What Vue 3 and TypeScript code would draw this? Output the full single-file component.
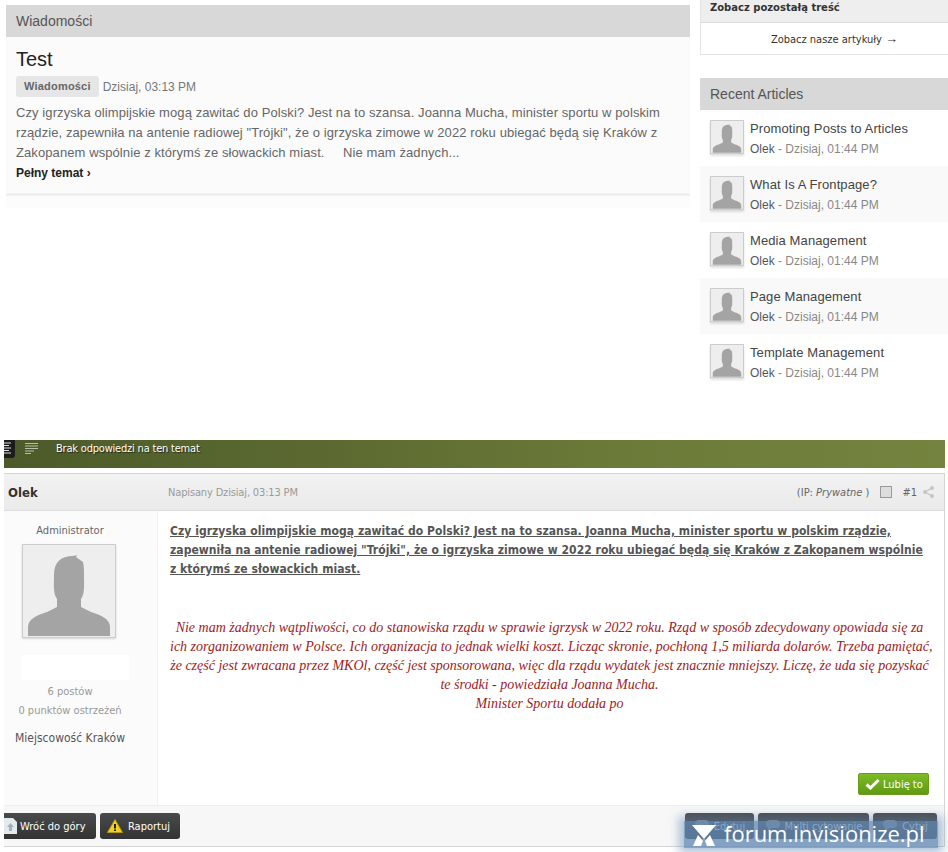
<template>
  <div class="page">
    <div class="top">
      <main class="news">
        <h2 class="block-head">Wiadomości</h2>
        <article class="story">
          <h1 class="story-title">Test</h1>
          <div class="story-meta">
            <span class="chip">Wiadomości</span>
            <span>Dzisiaj, 03:13 PM</span>
          </div>
          <p class="story-text">
            Czy igrzyska olimpijskie mogą zawitać do Polski? Jest na to szansa. Joanna Mucha, minister sportu w polskim<br />
            rządzie, zapewniła na antenie radiowej "Trójki", że o igrzyska zimowe w 2022 roku ubiegać będą się Kraków z<br />
            Zakopanem wspólnie z którymś ze słowackich miast. &nbsp;&nbsp;&nbsp; Nie mam żadnych...
          </p>
          <a class="story-more">Pełny temat ›</a>
        </article>
        <div class="news-tail"></div>
      </main>

      <aside class="side">
        <div class="see-more">
          <div class="see-more-head">Zobacz pozostałą treść</div>
          <div class="see-more-body">Zobacz nasze artykuły <span class="arrow">→</span></div>
        </div>
        <h2 class="block-head recent-head">Recent Articles</h2>
        <ul class="recent">
          <li v-for="(title, i) in articles" :key="title" class="recent-row" :class="{ odd: i % 2 === 1 }">
            <span class="thumb">
              <svg viewBox="0 0 92 92"><path :d="silhouette" /></svg>
            </span>
            <div>
              <div class="recent-title">{{ title }}</div>
              <div class="recent-meta"><b>Olek</b> - Dzisiaj, 01:44 PM</div>
            </div>
          </li>
        </ul>
      </aside>
    </div>

    <div class="topic-bar">
      <span class="bar-tab">
        <svg width="8" height="12" viewBox="0 0 8 12"><path d="M0 1h7M0 3.5h5M0 6h7M0 8.500h5M0 11h7" stroke="#ddd" /></svg>
      </span>
      <svg class="bar-icon" width="13" height="12" viewBox="0 0 13 12"><path d="M0 .5h13M0 3h13M0 5.500h13M0 8h9M0 10.500h6" stroke="#b9bfa5" /></svg>
      <span class="bar-text">Brak odpowiedzi na ten temat</span>
    </div>

    <section class="post">
      <header class="post-head">
        <strong class="author">Olek</strong>
        <span class="post-date">Napisany Dzisiaj, 03:13 PM</span>
        <span class="post-tools">
          <span class="ip">(IP: <i>Prywatne</i> )</span>
          <span class="check"></span>
          <span class="post-no">#1</span>
          <svg width="11" height="12" viewBox="0 0 11 12">
            <path d="M9 2 2 6l7 4" fill="none" stroke="#c4c4c4" stroke-width="1.2" />
            <circle cx="9" cy="2" r="1.900" fill="#c4c4c4" />
            <circle cx="2" cy="6" r="1.900" fill="#c4c4c4" />
            <circle cx="9" cy="10" r="1.900" fill="#c4c4c4" />
          </svg>
        </span>
      </header>

      <div class="post-main">
        <div class="author-col">
          <div class="rank">Administrator</div>
          <div class="avatar">
            <svg viewBox="0 0 92 92"><path :d="silhouette" /></svg>
          </div>
          <div class="rank-img"></div>
          <div class="stat">6 postów</div>
          <div class="stat">0 punktów ostrzeżeń</div>
          <div class="place">Miejscowość Kraków</div>
        </div>

        <div class="post-body">
          <p class="lead">
            <span v-for="line in leadLines" :key="line" class="lead-line"><u>{{ line }}</u></span>
          </p>
          <p class="quote">
            <span v-for="line in quoteLines" :key="line" class="quote-line">{{ line }}</span>
          </p>
          <div class="like-row">
            <span class="like">
              <svg width="15" height="12" viewBox="0 0 15 12"><path d="M1.500 6.500 5.500 10 13.500 2" fill="none" stroke="#fff" stroke-width="3" /></svg>
              Lubię to
            </span>
          </div>
        </div>
      </div>

      <footer class="post-foot">
        <div class="foot-group">
          <span class="btn btn-top">
            <svg width="13" height="16" viewBox="0 0 13 16"><path d="M0 0h9l4 4v12H0z" fill="#e4e9ee" /><path d="M6.500 5 3 9h2v4h3V9h2z" fill="#9fb2bf" /></svg>
            Wróć do góry
          </span>
          <span class="btn btn-report">
            <svg width="16" height="14" viewBox="0 0 16 14"><path d="M8 .5 15.500 13.500H.5z" fill="#f2d21e" stroke="#b99a10" /><path d="M7 5h2v4.500H7zM7 10.500h2V12H7z" fill="#222" /></svg>
            Raportuj
          </span>
        </div>
        <div class="foot-group">
          <span v-for="b in rightButtons" :key="b.label" class="btn btn-right" :style="{ width: `${b.width}px` }">
            <svg width="15" height="12" viewBox="0 0 15 12"><path d="M4 0h7a4 4 0 0 1 0 8H7l-4 4V7.500A4 4 0 0 1 4 0z" fill="#8a8a8a" /></svg>
            {{ b.label }}
          </span>
        </div>
      </footer>
    </section>

    <div class="watermark">
      <svg width="24" height="24" viewBox="0 0 24 24"><path d="M0 2h24L12 16z M1 23l5-11 5 6-2 5z M23 23l-5-11-5 6 2 5z" fill="#fff" /></svg>
      <span class="watermark-text">forum.invisionize.pl</span>
    </div>
  </div>
</template>

<script setup lang="ts">
const silhouette =
  'M5 91V82C5 74 14 70 24 67L34 62V54C30 48 31 40 31 30C31 17 38 11 50 11L54 10L53 12L60 17C61 22 61 26 61 30C61 40 62 48 58 54V62L68 67C78 70 87 74 87 82V91Z'

const articles: string[] = [
  'Promoting Posts to Articles',
  'What Is A Frontpage?',
  'Media Management',
  'Page Management',
  'Template Management',
]

const leadLines: string[] = [
  'Czy igrzyska olimpijskie mogą zawitać do Polski? Jest na to szansa. Joanna Mucha, minister sportu w polskim rządzie,',
  'zapewniła na antenie radiowej "Trójki", że o igrzyska zimowe w 2022 roku ubiegać będą się Kraków z Zakopanem wspólnie',
  'z którymś ze słowackich miast.',
]

const quoteLines: string[] = [
  'Nie mam żadnych wątpliwości, co do stanowiska rządu w sprawie igrzysk w 2022 roku. Rząd w sposób zdecydowany opowiada się za',
  'ich zorganizowaniem w Polsce. Ich organizacja to jednak wielki koszt. Licząc skronie, pochłoną 1,5 miliarda dolarów. Trzeba pamiętać,',
  'że część jest zwracana przez MKOl, część jest sponsorowana, więc dla rządu wydatek jest znacznie mniejszy. Liczę, że uda się pozyskać',
  'te środki - powiedziała Joanna Mucha.',
  'Minister Sportu dodała po',
]

const rightButtons = [
  { label: 'Edytuj', width: 69 },
  { label: 'Multi cytowanie', width: 111 },
  { label: 'Cytuj', width: 64 },
]
</script>

<style>
html,
body {
  background: #fff;
}
</style>

<style scoped>
.page {
  position: relative;
  width: 948px;
  height: 852px;
  overflow: hidden;
  background: #fff;
  font-family: "Liberation Sans", Arial, sans-serif;
  font-size: 12px;
  color: #666;
}

.top {
  display: flex;
  height: 440px;
}

.news {
  width: 684px;
  margin: 5px 0 0 6px;
}

.block-head {
  margin: 0;
  height: 32px;
  padding-left: 10px;
  background: #d8d8d8;
  color: #555;
  font-size: 14px;
  font-weight: 400;
  line-height: 32px;
}

.story {
  height: 159px;
  padding: 10px 10px 0;
  box-sizing: border-box;
  background: #fbfbfb;
  border-bottom: 3px solid #f0f0f0;
}

.story-title {
  margin: 0;
  color: #222;
  font-size: 20px;
  font-weight: 400;
  line-height: 25px;
}

.story-meta {
  display: flex;
  align-items: center;
  gap: 4px;
  margin-top: 4px;
  color: #777;
}

.chip {
  padding: 0 8px;
  background: #e6e6e6;
  border-radius: 3px;
  color: #666;
  font-size: 11px;
  font-weight: 700;
  letter-spacing: 0.2px;
  line-height: 21px;
}

.story-text {
  margin: 6px 0 0;
  font-size: 13px;
  letter-spacing: 0.09px;
  line-height: 20px;
}

.story-more {
  display: block;
  color: #222;
  font-weight: 700;
  line-height: 20px;
}

.news-tail {
  height: 12px;
  background: #fcfcfc;
}

.side {
  width: 248px;
  margin-left: 10px;
}

.see-more {
  border-left: 1px solid #e4e4e4;
  border-bottom: 1px solid #e4e4e4;
}

.see-more-head {
  height: 22px;
  padding-left: 9px;
  background: #eee;
  border-bottom: 1px solid #ddd;
  color: #333;
  font-family: "DejaVu Sans", Verdana, sans-serif;
  font-size: 10px;
  font-weight: 700;
  line-height: 16px;
}

.see-more-body {
  height: 31px;
  padding-left: 20px;
  text-align: center;
  color: #333;
  font-family: "DejaVu Sans Condensed", "DejaVu Sans", sans-serif;
  font-size: 11px;
  line-height: 31px;
}

.arrow {
  font-family: "Liberation Sans", sans-serif;
  font-size: 13px;
}

.recent-head {
  margin-top: 23px;
}

.recent {
  margin: 0;
  padding: 0;
  list-style: none;
}

.recent-row {
  display: flex;
  gap: 6px;
  height: 56px;
  padding: 10px 10px 0;
  box-sizing: border-box;
}

.recent-row.odd {
  background: #f9f9f9;
}

.thumb {
  flex: none;
  width: 32px;
  height: 32px;
  background: #eee;
  border: 1px solid #ccc;
  box-shadow: 0 2px 2px rgba(0, 0, 0, 0.12);
}

.thumb svg {
  display: block;
  width: 100%;
  height: 100%;
  fill: #a4a4a4;
}

.recent-title {
  color: #444;
  font-size: 13px;
  letter-spacing: 0.1px;
  line-height: 17px;
}

.recent-meta {
  margin-top: 4px;
  color: #888;
  line-height: 17px;
}

.recent-meta b {
  color: #555;
  font-weight: 400;
}

.topic-bar {
  display: flex;
  align-items: flex-start;
  height: 28px;
  margin: 0 3px 0 4px;
  background: linear-gradient(90deg, #4c5a2a 0%, #5c6a31 35%, #6b7a38 65%, #74843f 100%);
  color: #fff;
  font-family: "DejaVu Sans Condensed", "DejaVu Sans", sans-serif;
  font-size: 11px;
}

.bar-tab {
  display: flex;
  width: 11px;
  height: 18px;
  padding-top: 2px;
  box-sizing: border-box;
  background: #1c1c1c;
  border-bottom-right-radius: 3px;
}

.bar-icon {
  margin: 3px 0 0 10px;
}

.bar-text {
  margin-left: 18px;
  letter-spacing: -0.2px;
  line-height: 17px;
  text-shadow: 1px 1px 1px rgba(0, 0, 0, 0.6);
}

.post {
  margin: 5px 3px 0 4px;
  border-top: 1px solid #d5d5d5;
  border-bottom: 1px solid #d5d5d5;
  border-right: 1px solid #d5d5d5;
  overflow: hidden;
  font-family: "DejaVu Sans Condensed", "DejaVu Sans", sans-serif;
  font-size: 11px;
}

.post-head {
  display: flex;
  align-items: center;
  height: 37px;
  padding: 0 10px 0 4px;
  box-sizing: border-box;
  background: linear-gradient(#f2f2f2, #eaeaea);
  border-bottom: 1px solid #ddd;
}

.author {
  width: 160px;
  color: #333;
  font-size: 13px;
}

.post-date {
  color: #999;
  letter-spacing: -0.15px;
}

.post-tools {
  display: flex;
  align-items: center;
  margin-left: auto;
  color: #666;
}

.check {
  width: 10px;
  height: 10px;
  margin: 0 10px 0 11px;
  background: #ddd;
  border: 1px solid #999;
}

.post-no {
  margin-right: 6px;
}

.post-main {
  display: flex;
  height: 294px;
}

.author-col {
  flex: none;
  width: 154px;
  padding: 12px 21px 0 0;
  box-sizing: border-box;
  background: #fbfbfb;
  border-right: 1px solid #f0f0f0;
  text-align: center;
}

.rank {
  color: #666;
  line-height: 15px;
}

.avatar {
  width: 92px;
  height: 92px;
  margin: 6px 0 0 18px;
  background: #eee;
  border: 1px solid #ccc;
  box-shadow: 0 1px 2px rgba(0, 0, 0, 0.15);
}

.avatar svg {
  display: block;
  fill: #a4a4a4;
}

.rank-img {
  width: 108px;
  height: 25px;
  margin: 17px 0 0 17px;
  background: #fff;
}

.stat {
  margin-top: 4px;
  color: #999;
  line-height: 15px;
}

.place {
  margin-top: 12px;
  color: #555;
  font-size: 12px;
  line-height: 16px;
}

.post-body {
  display: flex;
  flex-direction: column;
  flex: 1;
  min-width: 0;
  padding: 11px 15px 10px 12px;
  box-sizing: border-box;
  background: #fff;
}

.lead {
  margin: 0;
  color: #555;
  font-size: 12px;
  font-weight: 700;
  letter-spacing: 0.04px;
}

.lead-line,
.quote-line {
  display: block;
  white-space: nowrap;
  line-height: 19px;
}

.quote {
  margin: 39px 0 0;
  color: #9c1c1c;
  font-family: "Liberation Serif", serif;
  font-size: 14px;
  font-style: italic;
  text-align: center;
}

.like-row {
  display: flex;
  justify-content: flex-end;
  margin-top: auto;
}

.like {
  display: flex;
  align-items: center;
  gap: 3px;
  width: 71px;
  height: 22px;
  padding-left: 6px;
  box-sizing: border-box;
  background: linear-gradient(#7dbb26, #609a12);
  border: 1px solid #6a9c1c;
  border-radius: 2px;
  color: #fff;
}

.post-foot {
  display: flex;
  justify-content: space-between;
  height: 41px;
  padding: 7px 7px 0 0;
  box-sizing: border-box;
  background: #f7f7f7;
  border-top: 1px solid #eee;
}

.foot-group {
  display: flex;
  gap: 4px;
}

.btn {
  display: flex;
  align-items: center;
  gap: 5px;
  height: 26px;
  padding: 0 10px 0 7px;
  box-sizing: border-box;
  background: linear-gradient(#4a4a4a, #333);
  border-radius: 3px;
  color: #fff;
  white-space: nowrap;
}

.btn-top {
  width: 96px;
  margin-left: -4px;
  padding-left: 4px;
  gap: 3px;
}

.btn-report {
  width: 80px;
}

.btn-right {
  justify-content: center;
  padding: 0 4px;
}

.watermark {
  position: absolute;
  left: 684px;
  bottom: 4px;
  display: flex;
  align-items: center;
  gap: 8px;
  width: 254px;
  height: 27px;
  padding-left: 8px;
  box-sizing: border-box;
  background: rgba(100, 138, 182, 0.78);
  box-shadow: 0 0 9px 5px rgba(100, 138, 182, 0.5);
  color: #fff;
  font-family: "Open Sans", sans-serif;
  font-size: 22px;
}

.watermark-text {
  margin-top: -4px;
}
</style>
